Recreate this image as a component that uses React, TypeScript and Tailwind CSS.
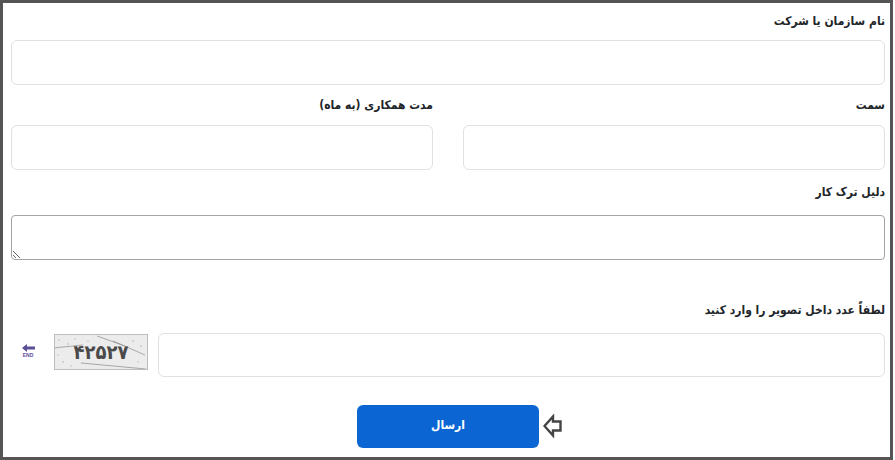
const labelClass = "block text-[12px] leading-[18px] font-bold text-[#212529]";
const inputClass = "block w-full h-[45px] rounded-[6px] border border-[#dee2e6] bg-white";

const CaptchaImage = () => (
  <div className="relative w-[94px] h-[36px] border border-[#bdbdbd] bg-[#ececec] overflow-hidden">
    <svg className="absolute inset-0" width="94" height="36" viewBox="0 0 94 36">
      <path d="M0 13 L30 10 M44 1 L72 11 M28 28 L93 34 M60 6 L92 20" stroke="#8a8a8a" strokeWidth="0.7" fill="none" />
      <g fill="#b5b5b5">
        <circle cx="6" cy="5" r="0.8" />
        <circle cx="15" cy="9" r="0.8" />
        <circle cx="22" cy="4" r="0.7" />
        <circle cx="35" cy="6" r="0.7" />
        <circle cx="80" cy="6" r="0.8" />
        <circle cx="88" cy="11" r="0.8" />
        <circle cx="85" cy="27" r="0.7" />
        <circle cx="10" cy="27" r="0.8" />
        <circle cx="18" cy="31" r="0.7" />
        <circle cx="5" cy="20" r="0.7" />
      </g>
    </svg>
    <span className="absolute inset-0 flex items-center justify-center text-[20px] leading-none font-bold text-[#4a4a4a]">
      ۴۲۵۲۷
    </span>
  </div>
);

const ReloadIcon = () => (
  <div className="flex flex-col items-center w-[14px] text-[#5b4f96]">
    <svg width="13" height="8" viewBox="0 0 13 8">
      <path d="M0 4 L5 0 V2.5 H13 V5.5 H5 V8 Z" fill="currentColor" />
    </svg>
    <span className="text-[5px] leading-[6px] font-bold font-['Liberation_Sans',sans-serif]">END</span>
  </div>
);

const ArrowIcon = () => (
  <svg width="19" height="24" viewBox="0 0 19 24">
    <path d="M1.5 12 L10 2.5 V7.5 H17.5 V16.5 H10 V21.5 Z" fill="white" stroke="#444" strokeWidth="2.4" strokeLinejoin="miter" />
  </svg>
);

export default function App() {
  return (
    <div className="w-[895px] h-[460px] bg-white pr-[2px]">
      <form
        dir="rtl"
        className="w-[893px] h-[460px] border-[3px] border-[#555555] pr-[5px] pl-[8px] pt-[9px] font-['DejaVu_Sans_Condensed','DejaVu_Sans',sans-serif]"
      >
        <label className={labelClass}>نام سازمان یا شرکت</label>
        <input className={`${inputClass} mt-[10px]`} />

        <div className="grid grid-cols-2 gap-[30px] mt-[11px]">
          <div>
            <label className={labelClass}>سمت</label>
            <input className={`${inputClass} mt-[11px] h-[44px]`} />
          </div>
          <div>
            <label className={labelClass}>مدت همکاری (به ماه)</label>
            <input className={`${inputClass} mt-[11px] h-[44px]`} />
          </div>
        </div>

        <label className={`${labelClass} mt-[13px]`}>دلیل ترک کار</label>
        <textarea className="block w-full h-[45px] mt-[14px] rounded-[4px] border border-[#a3a3a3] bg-white" />

        <label className={`${labelClass} mt-[41px]`}>لطفاً عدد داخل تصویر را وارد کنید</label>
        <div className="flex items-center mt-[14px]">
          <input className="block flex-1 h-[44px] rounded-[6px] border border-[#dee2e6] bg-white" />
          <div className="mr-[10px] ml-[19px] -mt-[6px]">
            <CaptchaImage />
          </div>
          <div className="ml-[10px] -mt-[8px]">
            <ReloadIcon />
          </div>
        </div>

        <div className="flex justify-center items-center mt-[28px]">
          <div className="relative">
            <button
              type="button"
              className="block w-[182px] h-[43px] pb-[4px] rounded-[6px] bg-[#0b66d4] text-white text-[12px] font-bold"
            >
              ارسال
            </button>
            <span className="absolute top-[9px] -right-[23px]">
              <ArrowIcon />
            </span>
          </div>
        </div>
      </form>
    </div>
  );
}
